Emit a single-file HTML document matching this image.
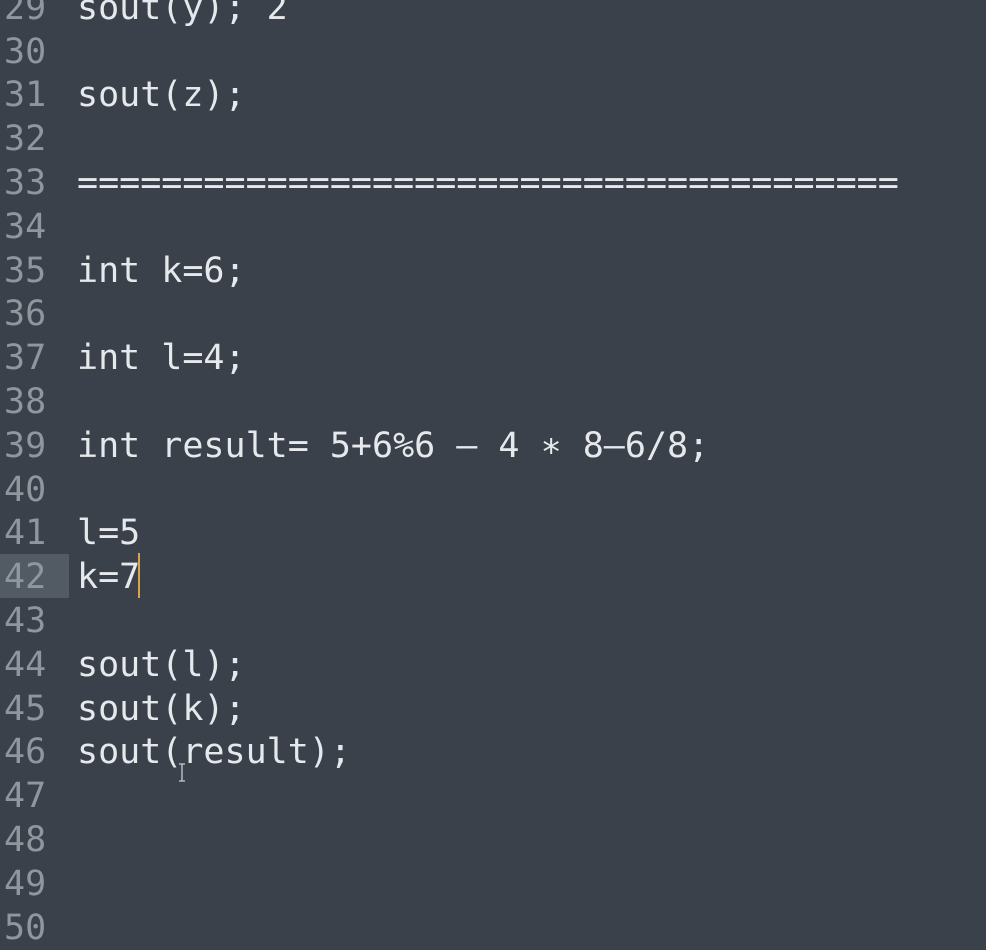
<!DOCTYPE html>
<html><head><style>
html,body{margin:0;padding:0;width:986px;height:944px;overflow:hidden;background:#3a414a;}
.l{position:absolute;left:0;height:43.8px;line-height:43.8px;font-family:"DejaVu Sans Mono","Liberation Mono",monospace;font-size:35px;white-space:pre;width:986px;}
.n{position:absolute;left:4px;color:#8f969d;}
.c{position:absolute;left:77px;color:#e6e9ec;}
.hl{position:absolute;left:0;top:554px;width:69px;height:44px;background:#525a63;}
.cur{position:absolute;left:138px;top:553px;width:2px;height:45px;background:#d9a54a;}
body>div.l{margin-top:3px;}
</style></head><body>
<div class="hl"></div>
<div class="l" style="top:-16.3px"><span class="n">29</span><span class="c">sout(y); 2</span></div>
<div class="l" style="top:27.5px"><span class="n">30</span></div>
<div class="l" style="top:71.3px"><span class="n">31</span><span class="c">sout(z);</span></div>
<div class="l" style="top:115.1px"><span class="n">32</span></div>
<div class="l" style="top:158.9px"><span class="n">33</span><span class="c">=======================================</span></div>
<div class="l" style="top:202.7px"><span class="n">34</span></div>
<div class="l" style="top:246.5px"><span class="n">35</span><span class="c">int k=6;</span></div>
<div class="l" style="top:290.3px"><span class="n">36</span></div>
<div class="l" style="top:334.1px"><span class="n">37</span><span class="c">int l=4;</span></div>
<div class="l" style="top:377.9px"><span class="n">38</span></div>
<div class="l" style="top:421.7px"><span class="n">39</span><span class="c">int result= 5+6%6 – 4 ∗ 8–6/8;</span></div>
<div class="l" style="top:465.5px"><span class="n">40</span></div>
<div class="l" style="top:509.3px"><span class="n">41</span><span class="c">l=5</span></div>
<div class="l" style="top:553.1px"><span class="n">42</span><span class="c">k=7</span></div>
<div class="l" style="top:596.9px"><span class="n">43</span></div>
<div class="l" style="top:640.7px"><span class="n">44</span><span class="c">sout(l);</span></div>
<div class="l" style="top:684.5px"><span class="n">45</span><span class="c">sout(k);</span></div>
<div class="l" style="top:728.3px"><span class="n">46</span><span class="c">sout(result);</span></div>
<div class="l" style="top:772.1px"><span class="n">47</span></div>
<div class="l" style="top:815.9px"><span class="n">48</span></div>
<div class="l" style="top:859.7px"><span class="n">49</span></div>
<div class="l" style="top:903.5px"><span class="n">50</span></div>
<div class="cur"></div>
<svg style="position:absolute;left:177px;top:763px" width="10" height="20"><path d="M2 1h6M5 1v17M2 18h6" stroke="#c8ccd0" stroke-width="1.3" fill="none"/></svg>
</body></html>
